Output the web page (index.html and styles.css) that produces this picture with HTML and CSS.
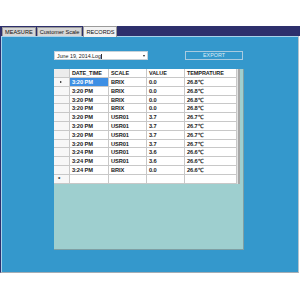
FILE: index.html
```html
<!doctype html>
<html>
<head>
	<meta charset="utf-8">
	<link rel="stylesheet" href="styles.css">
</head>
<body>
<div class="app">
	<div class="tabs">
		<div class="tab">MEASURE</div>
		<div class="tab">Customer Scale</div>
		<div class="tab active">RECORDS</div>
	</div>
	<div class="panel">
		<div class="toolbar">
			<div class="select"><span class="caret">June 19, 2014.Log</span><i class="arrow"></i></div>
			<div class="export">EXPORT</div>
		</div>
		<div class="grid">
			<div class="sheet">
				<div class="rows">
					<div class="row head">
						<div class="cell rh"></div><div class="cell">DATE_TIME</div><div class="cell">SCALE</div><div class="cell">VALUE</div><div class="cell">TEMPRATURE</div>
					</div>
					<div class="row">
						<div class="cell rh"><i class="mark"></i></div><div class="cell sel">3:20 PM</div><div class="cell">BRIX</div><div class="cell">0.0</div><div class="cell">26.8℃</div>
					</div>
					<div class="row">
						<div class="cell rh"></div><div class="cell">3:20 PM</div><div class="cell">BRIX</div><div class="cell">0.0</div><div class="cell">26.8℃</div>
					</div>
					<div class="row">
						<div class="cell rh"></div><div class="cell">3:20 PM</div><div class="cell">BRIX</div><div class="cell">0.0</div><div class="cell">26.8℃</div>
					</div>
					<div class="row">
						<div class="cell rh"></div><div class="cell">3:20 PM</div><div class="cell">BRIX</div><div class="cell">0.0</div><div class="cell">26.8℃</div>
					</div>
					<div class="row">
						<div class="cell rh"></div><div class="cell">3:20 PM</div><div class="cell">USR01</div><div class="cell">3.7</div><div class="cell">26.7℃</div>
					</div>
					<div class="row">
						<div class="cell rh"></div><div class="cell">3:20 PM</div><div class="cell">USR01</div><div class="cell">3.7</div><div class="cell">26.7℃</div>
					</div>
					<div class="row">
						<div class="cell rh"></div><div class="cell">3:20 PM</div><div class="cell">USR01</div><div class="cell">3.7</div><div class="cell">26.7℃</div>
					</div>
					<div class="row">
						<div class="cell rh"></div><div class="cell">3:20 PM</div><div class="cell">USR01</div><div class="cell">3.7</div><div class="cell">26.7℃</div>
					</div>
					<div class="row">
						<div class="cell rh"></div><div class="cell">3:24 PM</div><div class="cell">USR01</div><div class="cell">3.6</div><div class="cell">26.6℃</div>
					</div>
					<div class="row">
						<div class="cell rh"></div><div class="cell">3:24 PM</div><div class="cell">USR01</div><div class="cell">3.6</div><div class="cell">26.6℃</div>
					</div>
					<div class="row">
						<div class="cell rh"></div><div class="cell">3:24 PM</div><div class="cell">BRIX</div><div class="cell">0.0</div><div class="cell">26.6℃</div>
					</div>
					<div class="row">
						<div class="cell rh star">*</div><div class="cell"></div><div class="cell"></div><div class="cell"></div><div class="cell"></div>
					</div>
				</div>
				<div class="vscroll"></div>
			</div>
		</div>
	</div>
</div>
</body>
</html>
```

FILE: styles.css
```css
body { margin: 0;background: #fff;font-family: "Liberation Sans", Arial, sans-serif;color: #1a1a1a; }
.app { padding-top: 26px;width: 300px; }

.tabs { height: 10px;background: #2d2f6c;display: flex;padding-left: 2px;align-items: flex-end; }
.tab { height: 9px;box-sizing: border-box;padding: 0 2px;margin-right: 1px;background: #d6d6d6;border: 1px solid #9a9a9a;border-bottom: none;font-size: 5.6px;line-height: 8px;color: #111; }
.tab.active { height: 11px;margin-bottom: -1px;background: #f2f2f2;line-height: 10px;position: relative; }

.panel { height: 237px;width: 299px;box-sizing: border-box;background: #3498cc;border-left: 1px solid #2d2f6c;border-right: 1px solid #b8c4cc;border-bottom: 1px solid #a4adb5;box-shadow: inset 1px 1px 0 #a9d2ea;padding: 15px 0 0 53px; }

.toolbar { display: flex;height: 9px; }
.select { width: 94px;height: 9px;box-sizing: border-box;background: #fff;border: 1px solid #c6d2da;display: flex;align-items: center;padding-left: 2px;font-size: 5.3px; }
.caret { line-height: 6px;flex: 1; }
.caret::after { content: "";display: inline-block;width: 0.5px;height: 5px;background: #333;vertical-align: -1px;margin-left: 0.5px; }
.arrow { width: 0;height: 0;border-left: 1.5px solid transparent;border-right: 1.5px solid transparent;border-top: 2px solid #222;margin-right: 2px; }
.export { width: 58px;height: 9px;box-sizing: border-box;margin-left: 37px;border: 1px solid #a9cbe0;color: #dcecf6;font-size: 5.4px;line-height: 7px;text-align: center; }

.grid { width: 190px;height: 181px;margin-top: 9px;box-sizing: border-box;background: #9ecfcf;border-right: 1px solid #7f9fa3;border-bottom: 1px solid #7f9fa3; }
.sheet { display: flex;align-items: flex-start; }
.rows { width: 183px;background: #fff; }
.row { display: grid;grid-template-columns: 16px 39px 38px 38px 52px;height: 8.8px; }
.row.head { height: 9px; }
.cell { box-sizing: border-box;border-right: 1px solid #c8c8c8;border-bottom: 1px solid #c8c8c8;font-size: 5.7px;font-weight: bold;line-height: 8px;padding-left: 2px;white-space: nowrap;overflow: hidden;letter-spacing: -0.1px; }
.head .cell { line-height: 8.5px;font-size: 5.5px; }
.head .rh { background: #ececec; }
.rh { background: #f7f7f7;position: relative; }
.sel { background: #3d8fe4;color: #fff; }
.mark { position: absolute;left: 6px;top: 2.5px;width: 0;height: 0;border-top: 1.5px solid transparent;border-bottom: 1.5px solid transparent;border-left: 2px solid #111; }
.star { padding-left: 4px;font-size: 6px; }
.vscroll { width: 3px;height: 115px;background: #a8a8a8;border-left: 1px solid #e2e2e2;box-sizing: border-box; }
```
